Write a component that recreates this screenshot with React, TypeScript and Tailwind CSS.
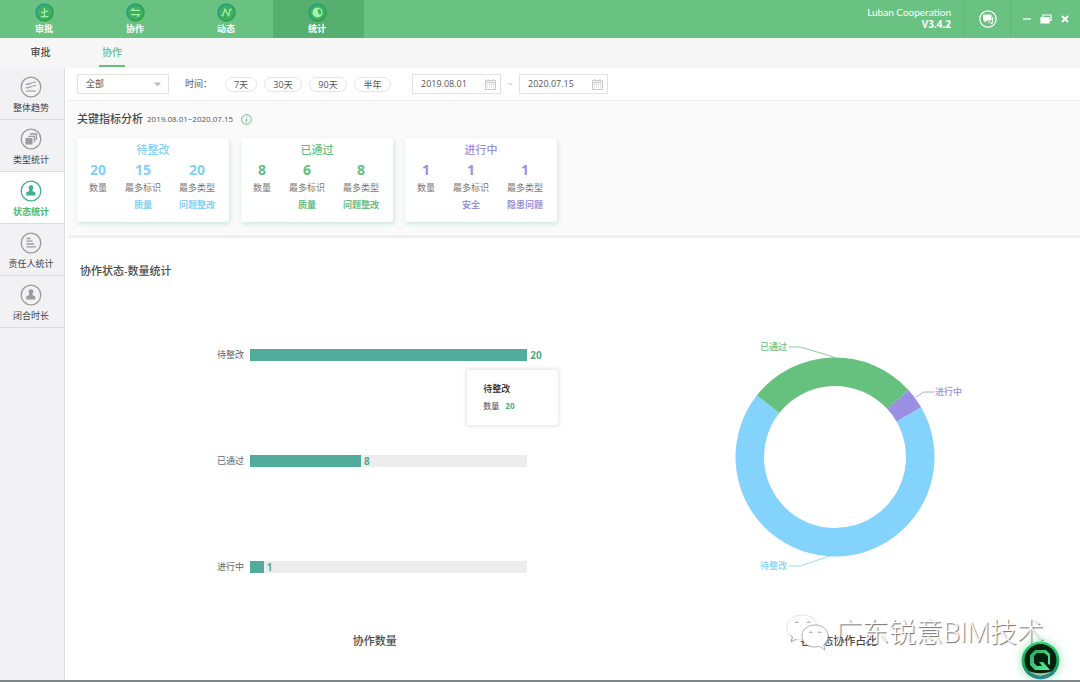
import { useState, type ReactNode } from "react";

const GREEN = "#66c17e";
const BLUE = "#83d3fd";
const PURPLE = "#9b8fe3";

const NAV = [
  {
    key: "approve", label: "审批",
    icon: <path d="M9 5v8M9 8h3.5M6 9h3M5.5 13h7" />,
  },
  {
    key: "coop", label: "协作",
    icon: <path d="M13 7H5.5l1.8-2M5 11h7.5l-1.8 2" />,
  },
  {
    key: "activity", label: "动态",
    icon: <path d="M4 12h1.500L7.500 6l3.500 6 1.500-6H14" />,
  },
  {
    key: "stats", label: "统计",
    icon: <><circle cx="9" cy="9" r="4.200" /><path d="M10 4.800a4.200 4.200 0 1 0 2.500 6.500C9.500 11 8.500 8 10 4.800z" fill="#a5f5ae" stroke="none" /></>,
  },
];

const PERSON = <path d="M8.600 7.600a2.400 2.400 0 1 1 4.400 1.300c-.9 1-.9 2 .1 2.600l2.100.8V15.500H6.300v-3.200l2.100-.8c1-.6 1-1.600.6-2.600z" fill="currentColor" stroke="none" />;

const SIDE = [
  {
    key: "trend", label: "整体趋势",
    icon: <path d="M6 8c3 1.500 4.500-2 10-2M6 11.500c3 1.500 4.500-2 10-2M6 15h10" fill="none" strokeWidth="1.200" />,
  },
  {
    key: "type", label: "类型统计",
    icon: <><path d="M5.500 10h7v6.500h-7z" fill="currentColor" stroke="none" /><path d="M8 8.300h6.500v6M10 6h6.500v6" fill="none" strokeWidth="1.300" /></>,
  },
  { key: "status", label: "状态统计", icon: PERSON },
  {
    key: "owner", label: "责任人统计",
    icon: <path d="M6.500 6.500h4M6.500 9.200h6M6.500 12h7.500M6.500 14.800h9.500" fill="none" strokeWidth="1.300" />,
  },
  { key: "duration", label: "闭合时长", icon: PERSON },
];

const CARDS = [
  { title: "待整改", color: "text-[#83d0f5]", count: 20, mark: 15, markName: "质量", type: 20, typeName: "问题整改" },
  { title: "已通过", color: "text-[#66be80]", count: 8, mark: 6, markName: "质量", type: 8, typeName: "问题整改" },
  { title: "进行中", color: "text-[#9b8fdc]", count: 1, mark: 1, markName: "安全", type: 1, typeName: "隐患问题" },
];

const STATUS_DATA = [
  { name: "待整改", value: 20 },
  { name: "已通过", value: 8 },
  { name: "进行中", value: 1 },
];

const RANGES = [
  { label: "7天", width: "w-8" },
  { label: "30天", width: "w-[38px]" },
  { label: "90天", width: "w-[38px]" },
  { label: "半年", width: "w-[37px]" },
];

function NavIcon({ children }: { children: ReactNode }) {
  return (
    <svg className="w-[19px] h-[19px]" viewBox="0 0 18 18" fill="none" stroke="#98f5a4" strokeWidth="1.2">
      <defs>
        <linearGradient id="ring" x1="0" y1="0" x2="1" y2="1">
          <stop offset="0" stopColor="#1f9c9a" />
          <stop offset="1" stopColor="#2fa52f" />
        </linearGradient>
      </defs>
      <circle cx="9" cy="9" r="8" fill="#43ae62" stroke="url(#ring)" strokeWidth="1.600" />
      {children}
    </svg>
  );
}

function DateField({ label, value }: { label: string; value: string }) {
  return (
    <label className="flex items-center w-[89px] h-5 pl-2 pr-1 border border-[#e2e2e2] bg-white">
      <input aria-label={label} defaultValue={value} className="min-w-0 flex-1 text-[9px] leading-4 text-[#555] outline-none" />
      <svg className="w-[11px] h-[11px] text-[#c8c8c8]" viewBox="0 0 11 11" fill="none" stroke="currentColor">
        <path d="M.5 1.500h10v9H.5zM.5 3.500h10M3 0v2M8 0v2" />
        <path d="M2 5.500h7M2 8h7" strokeDasharray="1 1" />
      </svg>
    </label>
  );
}

function StatColumn({ value, label, name, color }: { value: number; label: string; name?: string; color: string }) {
  return (
    <div className="flex flex-col items-center leading-4">
      <span className={`text-[14px] leading-4 font-bold ${color}`}>{value}</span>
      <span className="mt-0.5 text-[9px] text-[#777]">{label}</span>
      {name && <span className={`mt-px text-[9px] font-bold ${color}`}>{name}</span>}
    </div>
  );
}

// ring slice between two angles, clockwise from 12 o'clock
function slice(from: number, to: number) {
  const at = (deg: number, r: number) => {
    const a = (deg * Math.PI) / 180;
    return `${150 + r * Math.sin(a)} ${125 - r * Math.cos(a)}`;
  };
  const big = to - from > 180 ? 1 : 0;
  return `M${at(from, 99.5)}A99.500 99.500 0 ${big} 1 ${at(to, 99.5)}L${at(to, 71)}A71 71 0 ${big} 0 ${at(from, 71)}Z`;
}

function Donut() {
  return (
    <svg className="w-[300px] h-[250px] text-[9px] font-medium" viewBox="0 0 300 250" fill="none">
      <path d={slice(60, 308.3)} fill={BLUE} />
      <path d={slice(-51.7, 47.6)} fill={GREEN} />
      <path d={slice(47.6, 60)} fill={PURPLE} />
      <path d="M104 15h11l34 10" stroke={GREEN} strokeWidth="0.800" />
      <path d="M231 65l8-5h10" stroke={PURPLE} strokeWidth="0.800" />
      <path d="M104 234h11l30-10" stroke={BLUE} strokeWidth="0.800" />
      <text x="75" y="18" fill={GREEN}>已通过</text>
      <text x="250" y="63" fill={PURPLE}>进行中</text>
      <text x="75" y="237" fill={BLUE}>待整改</text>
    </svg>
  );
}

export default function App() {
  const [nav, setNav] = useState("stats");
  const [side, setSide] = useState("status");
  const [sub, setSub] = useState("协作");
  const max = Math.max(...STATUS_DATA.map((s) => s.value));

  return (
    <div className="relative flex flex-col min-h-screen bg-white border-b-2 border-[#7c8688] overflow-hidden font-['Open_Sans','Noto_Sans_CJK_SC',sans-serif] text-[#4a4a4a]">
      {/* Header */}
      <header className="flex h-[38px] bg-[#6ac282] text-white">
        <nav className="flex">
          {NAV.map((n) => (
            <button key={n.key} onClick={() => setNav(n.key)}
              className={`flex flex-col items-center w-[91px] pt-[3px] pr-[3px] ${nav === n.key ? "bg-[#56af6f]" : ""}`}>
              <NavIcon>{n.icon}</NavIcon>
              <span className="text-[9px] leading-[14px] font-bold">{n.label}</span>
            </button>
          ))}
        </nav>
        <div className="ml-auto pt-1.5 pr-[13px] text-right text-[10px] leading-3">
          <div className="font-['Lato']">Luban Cooperation</div>
          <div className="font-bold">V3.4.2</div>
        </div>
        <button aria-label="消息" className="flex items-center justify-center w-[47px] border-x border-[#62b87a]">
          <svg className="w-[18px] h-[18px]" viewBox="0 0 18 18" fill="none" stroke="currentColor">
            <circle cx="9" cy="9" r="8.200" strokeWidth="1.200" />
            <path d="M4.500 5h7.500v5H8l-2 2v-2H4.500z" fill="currentColor" />
            <path d="M13.700 7v5H13v2l-2.500-2H9" />
          </svg>
        </button>
        <div className="flex items-center gap-[9px] pl-3 pr-[11px]">
          <button aria-label="最小化">
            <svg className="w-2 h-3" viewBox="0 0 8 12" stroke="currentColor" strokeWidth="1.200"><path d="M0 6h8" /></svg>
          </button>
          <button aria-label="还原">
            <svg className="w-3 h-3" viewBox="0 0 12 12" fill="none" stroke="currentColor" strokeWidth="1.200">
              <path d="M3 4V2h8v5.500H9" />
              <path d="M1 4.500h8V10H1z" fill="currentColor" />
            </svg>
          </button>
          <button aria-label="关闭">
            <svg className="w-2 h-2" viewBox="0 0 8 8" stroke="currentColor" strokeWidth="1.800"><path d="M1 1l6 6M7 1L1 7" /></svg>
          </button>
        </div>
      </header>

      {/* Sub tabs */}
      <div className="flex h-[30px] bg-[#f6f6f7] text-[10px] font-medium">
        {["审批", "协作"].map((t) => (
          <button key={t} onClick={() => setSub(t)} className={`flex justify-center ${t === "审批" ? "w-[81px]" : "w-[62px]"}`}>
            <span className={`w-[26px] h-[29px] leading-[29px] border-b-2 ${sub === t ? "border-[#66c17e] text-[#66c17e]" : "border-transparent"}`}>{t}</span>
          </button>
        ))}
      </div>

      <div className="flex flex-1">
        {/* Sidebar */}
        <aside className="w-[65px] shrink-0 bg-[#f2f1f3] border-r border-[#dcdcde]">
          {SIDE.map((s) => (
            <button key={s.key} onClick={() => setSide(s.key)}
              className={`flex flex-col items-center w-full h-[52px] pt-2 pr-0.5 border-b border-[#dcdcde] ${side === s.key ? "bg-white text-[#3fb28c]" : "text-[#9b9b9b]"}`}>
              <svg className="w-[22px] h-[22px]" viewBox="0 0 22 22" stroke="currentColor">
                <circle cx="11" cy="11" r="9.800" fill="none" strokeWidth="1.300" />
                {s.icon}
              </svg>
              <span className={`mt-0.5 text-[9px] leading-4 ${side === s.key ? "text-[#4fb96f] font-bold" : "text-[#444]"}`}>{s.label}</span>
            </button>
          ))}
        </aside>

        <main className="flex-1 min-w-0 pl-[3px]">
          {/* Filters */}
          <div className="flex items-center h-[33px] pl-[9px] border-b border-[#ececec] text-[9px] text-[#555]">
            <div className="relative">
              <select aria-label="类型" className="w-[92px] h-5 pl-2 border border-[#e2e2e2] bg-white appearance-none outline-none">
                <option>全部</option>
              </select>
              <svg className="absolute right-2 top-2 w-[7px] h-[5px] text-[#bbb] pointer-events-none" viewBox="0 0 7 5"><path d="M0 .5h7L3.500 4.500z" fill="currentColor" /></svg>
            </div>
            <span className="ml-4 w-10">时间：</span>
            <div className="flex gap-[7px]">
              {RANGES.map((r) => (
                <button key={r.label} className={`${r.width} h-[15px] rounded-full border border-[#e4e4e4] leading-[13px]`}>{r.label}</button>
              ))}
            </div>
            <div className="flex items-center gap-[5px] ml-[21px]">
              <DateField label="开始日期" value="2019.08.01" />
              <span className="w-2 text-center text-[#bbb]">~</span>
              <DateField label="结束日期" value="2020.07.15" />
            </div>
          </div>

          {/* Key figures */}
          <section className="pt-2.5 pb-[13px] pl-[9px] bg-[#fafafa] border-b-3 border-[#f0f0f0]">
            <div className="flex items-center h-4">
              <h2 className="text-[11px] font-medium">关键指标分析</h2>
              <span className="ml-1 text-[8px] text-[#555]">2019.08.01~2020.07.15</span>
              <svg className="ml-2 w-[11px] h-[11px] text-[#4fb97a]" viewBox="0 0 11 11" fill="none" stroke="currentColor">
                <circle cx="5.500" cy="5.500" r="4.800" strokeWidth="0.900" />
                <path d="M6 2.500l-.2 1M5.600 4.800L5 8.500" />
              </svg>
            </div>
            <div className="flex gap-3 mt-[11px]">
              {CARDS.map((c) => (
                <div key={c.title} className="w-[152px] h-[84px] pt-1 bg-white rounded-[3px] shadow-[1px_2px_4px_rgba(90,190,150,0.3)]">
                  <h3 className={`text-center text-[11px] leading-4 font-medium ${c.color}`}>{c.title}</h3>
                  <div className="flex gap-[18px] mt-1 pl-3">
                    <StatColumn value={c.count} label="数量" color={c.color} />
                    <StatColumn value={c.mark} label="最多标识" name={c.markName} color={c.color} />
                    <StatColumn value={c.type} label="最多类型" name={c.typeName} color={c.color} />
                  </div>
                </div>
              ))}
            </div>
          </section>

          {/* Charts */}
          <section className="pt-6">
            <h2 className="pl-3 text-[11px] leading-[18px] font-medium">协作状态-数量统计</h2>
            <div className="grid grid-cols-[2fr_1fr] pr-[92px]">
              <div className="flex flex-col pt-[69px]">
                <div className="flex flex-col gap-[94px] pl-[149px] pr-[154px]">
                  {STATUS_DATA.map((s, i) => (
                    <div key={s.name} className="relative flex items-center h-3">
                      <span className="w-[33px] shrink-0 text-[9px] leading-3 text-[#666]">{s.name}</span>
                      <div className="flex flex-1 items-center h-3 bg-[#eeeded]">
                        <div className="h-full shrink-0 bg-[#52ac9b]" style={{ width: `${(s.value / max) * 100}%` }} />
                        <span className="ml-[3px] text-[10px] leading-3 font-bold text-[#52ac8c]">{s.value}</span>
                      </div>
                      {i === 0 && (
                        <div className="absolute top-5 -right-8 w-[93px] h-[57px] pt-3 pl-4 bg-white border border-[#eee] rounded-[3px] shadow-[0_0_4px_rgba(0,0,0,0.12)] text-[9px]">
                          <div className="leading-[14px] font-medium text-[#222]">{s.name}</div>
                          <div className="mt-[3px] text-[8px] leading-[14px]">数量<b className="ml-1.5 text-[#45b38c]">{s.value}</b></div>
                        </div>
                      )}
                    </div>
                  ))}
                </div>
                <h3 className="mt-[59px] text-center text-[11px] leading-[18px] font-medium">协作数量</h3>
              </div>
              <div className="flex flex-col items-center pt-[52px]">
                <Donut />
                <h3 className="mt-[50px] pl-2 text-[11px] leading-[18px] font-medium">各状态协作占比</h3>
              </div>
            </div>
          </section>
        </main>
      </div>

      {/* Watermark */}
      <div className="absolute right-[36px] bottom-[29px] flex items-center gap-1.5 pointer-events-none">
        <svg className="w-[44px] h-[38px]" viewBox="0 0 44 38" fill="#fff" stroke="#999" strokeWidth="0.800">
          <path d="M17 2C8 2 2 7.500 2 14.500c0 4 2 7.200 5.500 9.500L6 29l5.500-3c2 .6 4 .8 6 .7C29 26 33 20 32 13 31 6 25 2 17 2z" stroke="#ddd" />
          <path d="M5 22l2.500 2L6 29l5.500-3" fill="none" />
          <path d="M30 12c-8 0-13 4.800-13 11s5 11 13 11c1.600 0 3.200-.3 4.600-.7L40 37l-1.200-5.200C41.500 29.800 43 26.800 43 23c0-6.200-5-11-13-11z" />
          <path d="M10 10a2 2 0 0 1 3.500 0M22 10a2 2 0 0 1 3.500 0M24 20a1.800 1.800 0 0 1 3.200 0M33 20a1.800 1.800 0 0 1 3.200 0" fill="none" stroke="#777" />
        </svg>
        <span className="text-[27px] leading-9 font-light text-white whitespace-nowrap [text-shadow:1px_1px_1px_#666]">广东锐意BIM技术</span>
      </div>

      {/* Assistant */}
      <button aria-label="助手" className="absolute right-5 bottom-0 rounded-full shadow-[0_0_8px_rgba(60,200,120,0.5)]">
        <svg className="w-[39px] h-[39px]" viewBox="0 0 39 39">
          <defs>
            <linearGradient id="rim" x1="0" y1="0" x2="0" y2="1">
              <stop offset="0" stopColor="#2bd873" />
              <stop offset="0.700" stopColor="#1c9c62" />
              <stop offset="1" stopColor="#2d83a0" />
            </linearGradient>
            <linearGradient id="mark" x1="0" y1="0" x2="1" y2="1">
              <stop offset="0" stopColor="#2aa35c" />
              <stop offset="1" stopColor="#5df09a" />
            </linearGradient>
          </defs>
          <circle cx="19.500" cy="19.500" r="19" fill="url(#rim)" />
          <circle cx="19.500" cy="19" r="16" fill="#04200f" />
          <path d="M8 30a16 16 0 0 0 23 0c-7 3-16 3-23 0z" fill="#9bc9a0" />
          <path d="M14 9h11l4 4v11l-2-1v-8l-4-3h-7l-3 3v7l3 3h5l-3-4h4l7 8H14l-5-5V14z" fill="url(#mark)" />
        </svg>
      </button>
    </div>
  );
}
